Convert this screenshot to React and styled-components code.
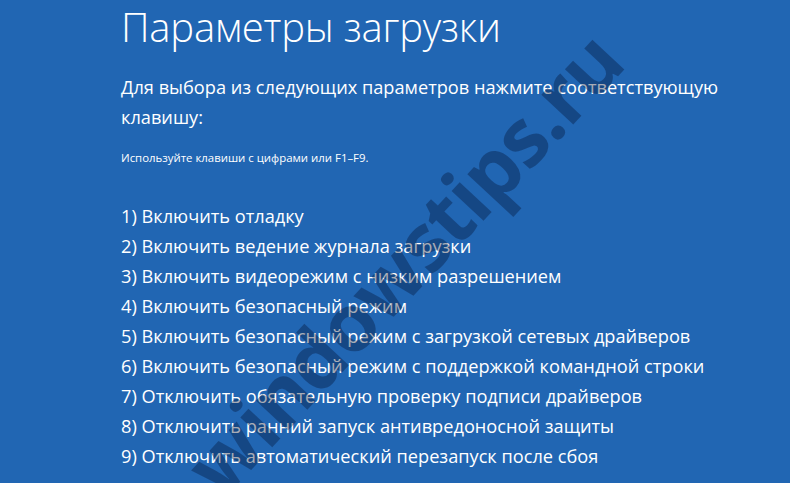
import React from 'react'
import styled, { createGlobalStyle } from 'styled-components'

const GlobalStyle = createGlobalStyle`
  html, body {
    margin: 0;
    padding: 0;
    background: #2166b3;
  }
  body {
    font-family: "Open Sans", "Noto Sans", sans-serif;
    color: #ffffff;
  }
`

const options = [
  'Включить отладку',
  'Включить ведение журнала загрузки',
  'Включить видеорежим с низким разрешением',
  'Включить безопасный режим',
  'Включить безопасный режим с загрузкой сетевых драйверов',
  'Включить безопасный режим с поддержкой командной строки',
  'Отключить обязательную проверку подписи драйверов',
  'Отключить ранний запуск антивредоносной защиты',
  'Отключить автоматический перезапуск после сбоя',
]

const Screen = styled.div`
  position: relative;
  width: 790px;
  height: 483px;
  overflow: hidden;
  background: #2166b3;
  box-sizing: border-box;
  padding: 2px 0 0 121px;
`

const Title = styled.h1`
  margin: 0;
  font-weight: 300;
  font-size: 40px;
  line-height: 50px;
  letter-spacing: -0.2px;
`

const Lead = styled.p`
  margin: 20px 0 0;
  font-size: 18.2px;
  line-height: 30px;
  font-weight: 400;
  width: 640px;
`

const Hint = styled.p`
  margin: 17px 0 0;
  font-size: 11.4px;
  line-height: 18px;
`

const Options = styled.ol`
  list-style: none;
  margin: 34px 0 0;
  padding: 0;
`

const Option = styled.li`
  font-size: 18.2px;
  line-height: 30px;
  white-space: nowrap;
`

const Watermark = styled.div`
  position: absolute;
  left: 402px;
  top: 262px;
  transform: translate(-50%, -50%) rotate(-47deg);
  font-family: "Open Sans", "Noto Sans", sans-serif;
  font-weight: 700;
  font-size: 80px;
  letter-spacing: -1.5px;
  color: rgba(0, 12, 40, 0.34);
  white-space: nowrap;
  pointer-events: none;
`

export default function App() {
  return (
    <>
      <GlobalStyle />
      <Screen>
        <Title>Параметры загрузки</Title>
        <Lead>Для выбора из следующих параметров нажмите соответствующую клавишу:</Lead>
        <Hint>Используйте клавиши с цифрами или F1–F9.</Hint>
        <Options>
          {options.map((text, i) => (
            <Option key={i}>{i + 1}) {text}</Option>
          ))}
        </Options>
        <Watermark>windowstips.ru</Watermark>
      </Screen>
    </>
  )
}
